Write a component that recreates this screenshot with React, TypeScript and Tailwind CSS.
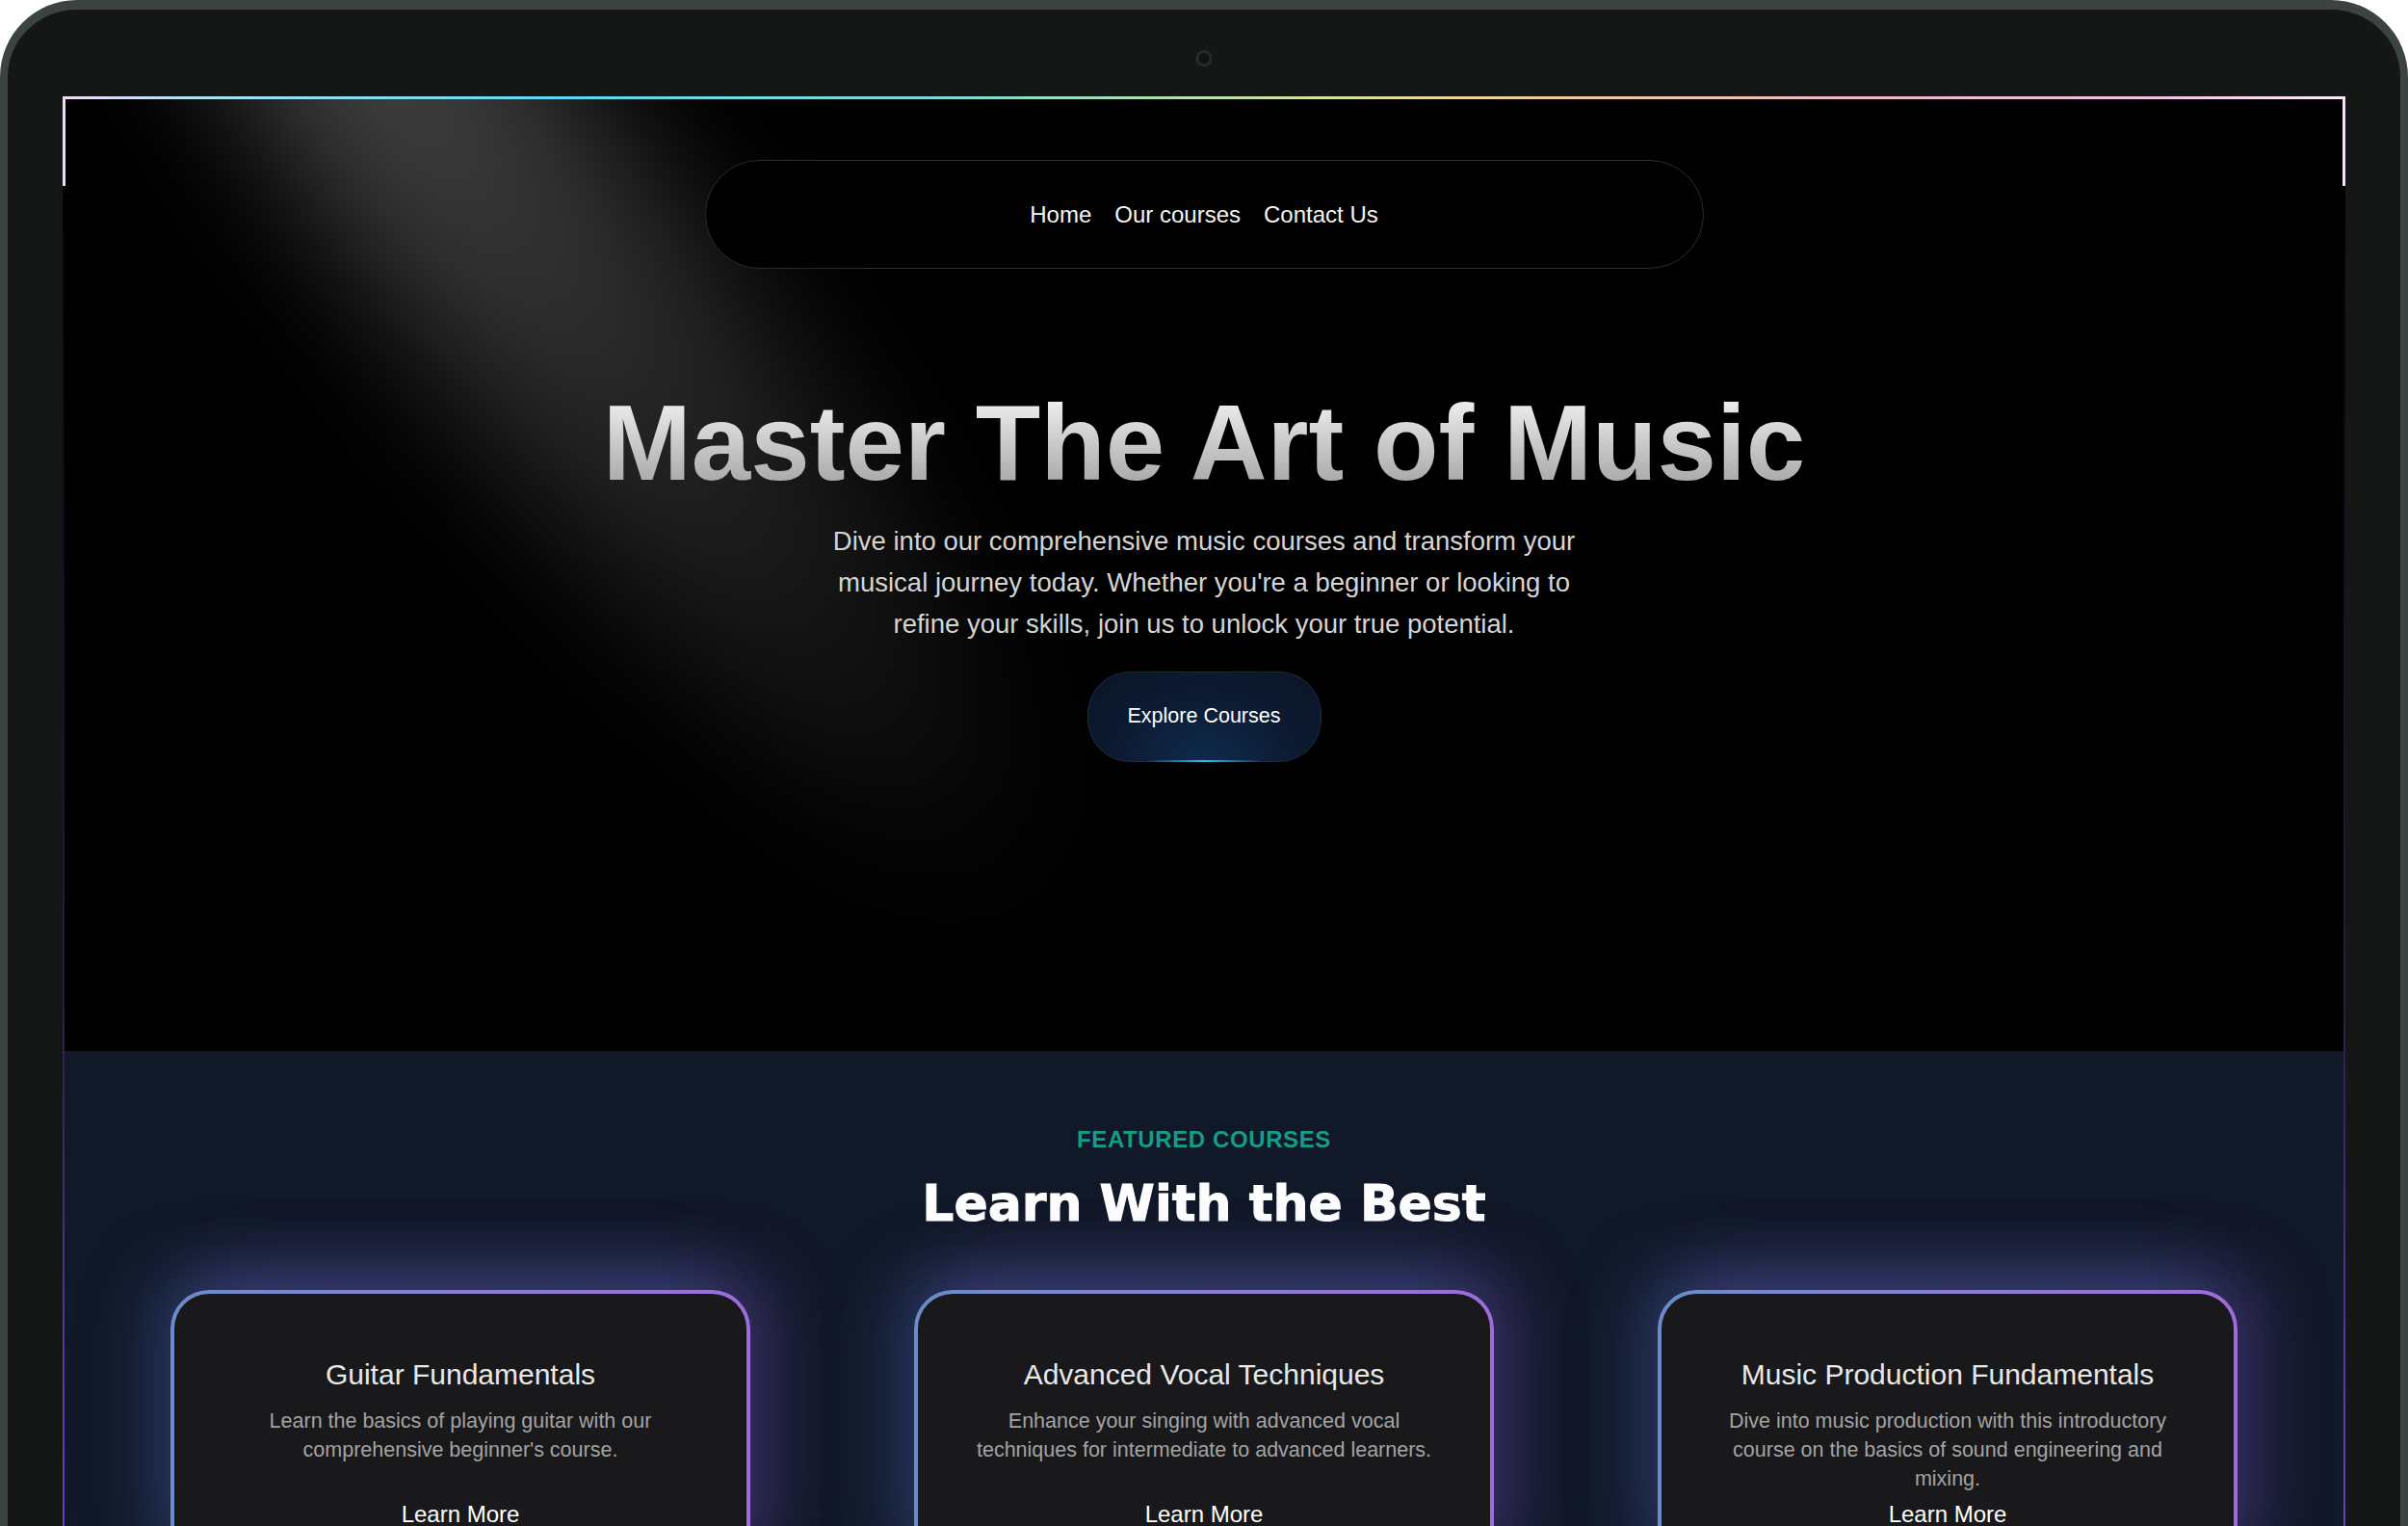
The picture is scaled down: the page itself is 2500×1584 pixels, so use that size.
import React from "react";

const courses = [
  {
    title: "Guitar Fundamentals",
    desc: "Learn the basics of playing guitar with our comprehensive beginner's course.",
  },
  {
    title: "Advanced Vocal Techniques",
    desc: "Enhance your singing with advanced vocal techniques for intermediate to advanced learners.",
  },
  {
    title: "Music Production Fundamentals",
    desc: "Dive into music production with this introductory course on the basics of sound engineering and mixing.",
  },
];

function Spotlight() {
  return (
    <svg
      className="pointer-events-none absolute left-0 top-0"
      width="2370"
      height="991"
      viewBox="0 0 2370 991"
      fill="none"
    >
      <defs>
        <linearGradient id="beam" x1="0" y1="0" x2="1" y2="0">
          <stop offset="0" stopColor="#ffffff" stopOpacity="0.27" />
          <stop offset="0.33" stopColor="#ffffff" stopOpacity="0.24" />
          <stop offset="0.62" stopColor="#ffffff" stopOpacity="0.13" />
          <stop offset="1" stopColor="#ffffff" stopOpacity="0" />
        </linearGradient>
        <filter id="blur" x="-50%" y="-50%" width="200%" height="200%">
          <feGaussianBlur stdDeviation="72" />
        </filter>
      </defs>
      <g filter="url(#blur)">
        <ellipse
          cx="530"
          cy="220"
          rx="800"
          ry="150"
          transform="rotate(52 530 220)"
          fill="url(#beam)"
        />
      </g>
    </svg>
  );
}

export default function App() {
  return (
    <div className="min-h-screen bg-white font-['Liberation_Sans',Arial,sans-serif]">
      <div className="relative w-full rounded-t-[80px] border-x-[8px] border-t-[10px] border-[#3b4343] bg-[#151716] px-[57px] pt-[90px]">
        {/* camera */}
        <div className="absolute left-1/2 top-[42px] h-[17px] w-[17px] -translate-x-1/2 rounded-full border-[3px] border-[#272a2a] bg-[#111313]" />

        {/* screen */}
        <div className="relative overflow-hidden bg-black">
          {/* screen edge decorations */}
          <div className="pointer-events-none absolute left-0 right-0 top-0 z-20 h-[3px] bg-[linear-gradient(90deg,#f6dcf4_0%,#a8e2f2_6%,#5fd6ef_22%,#7fdcd0_40%,#d8e29a_55%,#f4c99a_66%,#f3b4cf_80%,#f2c4e4_92%,#f8ecf8_100%)]" />
          <div className="pointer-events-none absolute left-0 top-0 z-20 h-[93px] w-[3px] bg-[#eddcf3]" />
          <div className="pointer-events-none absolute right-0 top-0 z-20 h-[93px] w-[3px] bg-[#f2e4f3]" />
          <div className="pointer-events-none absolute bottom-0 left-0 top-[93px] z-20 w-[2px] bg-[linear-gradient(180deg,transparent_0%,#2a1c48_55%,#5b3aa6_80%,#7248cc_100%)]" />
          <div className="pointer-events-none absolute bottom-0 right-0 top-[93px] z-20 w-[2px] bg-[linear-gradient(180deg,transparent_0%,#2a1c48_55%,#5b3aa6_80%,#7248cc_100%)]" />

          {/* hero */}
          <section className="relative h-[991px] overflow-hidden bg-black">
            <Spotlight />
            <div className="relative z-10 flex flex-col items-center">
              <nav className="mt-[66px] flex h-[113px] w-[1037px] items-center justify-center gap-6 rounded-full border border-[#2c2c2c] bg-black text-[24px] text-[#f5f5f5]">
                <a>Home</a>
                <a>Our courses</a>
                <a>Contact Us</a>
              </nav>

              <h1 className="mt-[126px] bg-gradient-to-b from-[#f7f7f7] to-[#9e9e9e] bg-clip-text text-[110.5px] font-bold leading-none text-transparent">
                Master The Art of Music
              </h1>

              <p className="mt-[24px] max-w-[800px] text-center text-[27.5px] leading-[43px] text-[#d4d4d4]">
                Dive into our comprehensive music courses and transform your musical journey today. Whether you're a beginner or looking to refine your skills, join us to unlock your true potential.
              </p>

              <button className="relative mt-[28px] flex h-[94px] w-[243px] items-center justify-center rounded-[44px] border border-[#1e2a40] bg-[radial-gradient(ellipse_at_bottom,#0f2b4e_0%,#0c1a31_55%,#0b1526_100%)] text-[21.5px] text-white">
                Explore Courses
                <span className="absolute -bottom-px left-[60px] right-[60px] h-[2px] bg-gradient-to-r from-transparent via-[#22c5ee] to-transparent" />
              </button>
            </div>
          </section>

          {/* featured courses */}
          <section className="bg-[#111827] px-[112px] pb-24 pt-[76px]">
            <div className="text-center text-[24px] font-bold leading-[32px] tracking-wide text-[#169c88]">
              FEATURED COURSES
            </div>
            <h2 className="mt-[24px] text-center font-['DejaVu_Sans',sans-serif] text-[52px] font-bold leading-none text-white [-webkit-text-stroke:1px_white]">
              Learn With the Best
            </h2>

            <div className="mt-16 grid grid-cols-3 gap-[170px]">
              {courses.map((c) => (
                <div
                  key={c.title}
                  className="rounded-[40px] bg-gradient-to-r from-[#6c8bc8] to-[#9d6bdb] p-[4px] shadow-[-25px_-20px_70px_rgba(70,110,190,0.3),25px_-20px_70px_rgba(140,90,220,0.3)]"
                >
                  <div className="flex h-full flex-col items-center rounded-[36px] bg-[#19191b] px-12 pb-12 pt-[66px] text-center">
                    <h3 className="text-[30px] leading-[36px] text-[#e8e8e8]">{c.title}</h3>
                    <p className="mb-[6px] mt-[15px] text-[21.5px] leading-[30px] text-[#a3a3a3]">{c.desc}</p>
                    <a className="mt-auto text-[24px] leading-[32px] text-white">Learn More</a>
                  </div>
                </div>
              ))}
            </div>
          </section>
        </div>
      </div>
    </div>
  );
}
